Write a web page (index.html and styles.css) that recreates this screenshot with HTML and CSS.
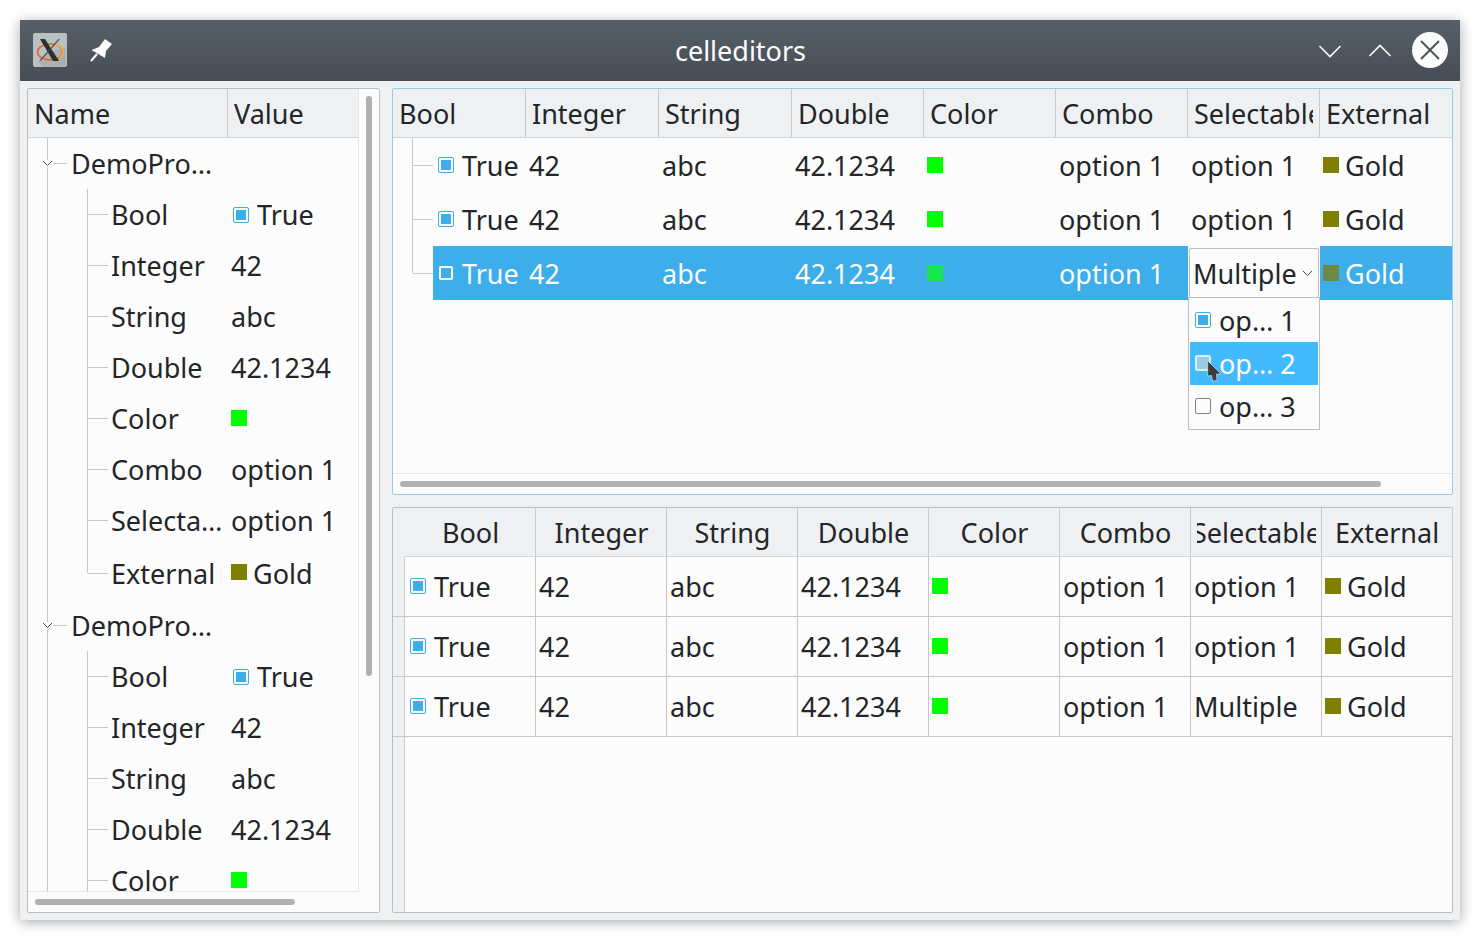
FILE: index.html
```html
<!DOCTYPE html>
<html lang="en">
<head>
  <meta charset="UTF-8" />
  <title>celleditors</title>
  <link rel="stylesheet" href="styles.css">
</head>
<body>
<div class="window">

  <div class="titlebar">
    <div class="title-left">
      <svg class="app-icon" width="34" height="34" viewBox="0 0 34 34">
        <rect width="34" height="34" rx="2" fill="#b9c1c3"/>
        <path d="M5 29 L14 20 L33 14 L33 32 Q33 34 31 34 L11 34 Z" fill="#a9b1b3"/>
        <ellipse cx="17" cy="19" rx="12.5" ry="8" fill="none" stroke="#e8641c" stroke-width="1.5"/>
        <path d="M21 11.5 A12.5 8 0 0 1 26 25" fill="none" stroke="#f2b233" stroke-width="1.5"/>
        <path d="M7 6 H12 L26 28 H20 Z" fill="#2e2e2e"/>
        <path d="M27 6 L8 27.5 H6.5 L25.5 6 Z" fill="#4a4a4a"/>
      </svg>
      <svg class="pin-icon" width="24" height="24" viewBox="0 0 24 24">
        <path d="M15 1 L22 6 L16 13 L15 20 L1.5 12 L9 9 Z" fill="#fcfcfc"/>
        <path d="M7 16 L1 23" stroke="#fcfcfc" stroke-width="2"/>
      </svg>
    </div>
    <div class="title-text">celleditors</div>
    <div class="title-right">
      <svg class="title-btn" width="24" height="14" viewBox="0 0 24 14"><path d="M1.5 2 L12 12.5 L22.5 2" fill="none" stroke="#fcfcfc" stroke-width="1.6"/></svg>
      <svg class="title-btn" width="24" height="14" viewBox="0 0 24 14"><path d="M1.5 12 L12 1.5 L22.5 12" fill="none" stroke="#fcfcfc" stroke-width="1.6"/></svg>
      <svg class="close-icon" width="36" height="36" viewBox="0 0 36 36">
        <circle cx="18" cy="18" r="18" fill="#fcfcfc"/>
        <path d="M9 9 L27 27 M27 9 L9 27" stroke="#4d545c" stroke-width="2"/>
      </svg>
    </div>
  </div>

  <div class="content">

    <div class="panel tree-panel">
      <div class="tree-view">
        <div class="tree-head">
          <div class="th th-name">Name</div>
          <div class="th th-value">Value</div>
        </div>
        <div class="tree-body">

          <div class="tree-row">
            <div class="guide g-root"><svg class="chevron" width="11" height="7" viewBox="0 0 11 7"><path d="M1 1 L5.5 5.5 L10 1" fill="none" stroke="#45494d" stroke-width="1"/></svg></div>
            <div class="tree-name">DemoPro…</div>
          </div>
          <div class="tree-row"><div class="guide g-v"></div><div class="guide g-t"></div><div class="tree-name sub">Bool</div><div class="tree-val"><span class="check on"></span><span class="val-gap">True</span></div></div>
          <div class="tree-row"><div class="guide g-v"></div><div class="guide g-t"></div><div class="tree-name sub">Integer</div><div class="tree-val">42</div></div>
          <div class="tree-row"><div class="guide g-v"></div><div class="guide g-t"></div><div class="tree-name sub">String</div><div class="tree-val">abc</div></div>
          <div class="tree-row"><div class="guide g-v"></div><div class="guide g-t"></div><div class="tree-name sub">Double</div><div class="tree-val">42.1234</div></div>
          <div class="tree-row"><div class="guide g-v"></div><div class="guide g-t"></div><div class="tree-name sub">Color</div><div class="tree-val"><span class="swatch green"></span></div></div>
          <div class="tree-row"><div class="guide g-v"></div><div class="guide g-t"></div><div class="tree-name sub">Combo</div><div class="tree-val">option 1</div></div>
          <div class="tree-row"><div class="guide g-v"></div><div class="guide g-t"></div><div class="tree-name sub">Selecta…</div><div class="tree-val">option 1</div></div>
          <div class="tree-row tall"><div class="guide g-v"></div><div class="guide g-l"></div><div class="tree-name sub">External</div><div class="tree-val"><span class="swatch gold"></span><span class="gold-gap">Gold</span></div></div>

          <div class="tree-row">
            <div class="guide g-root"><svg class="chevron" width="11" height="7" viewBox="0 0 11 7"><path d="M1 1 L5.5 5.5 L10 1" fill="none" stroke="#45494d" stroke-width="1"/></svg></div>
            <div class="tree-name">DemoPro…</div>
          </div>
          <div class="tree-row"><div class="guide g-v"></div><div class="guide g-t"></div><div class="tree-name sub">Bool</div><div class="tree-val"><span class="check on"></span><span class="val-gap">True</span></div></div>
          <div class="tree-row"><div class="guide g-v"></div><div class="guide g-t"></div><div class="tree-name sub">Integer</div><div class="tree-val">42</div></div>
          <div class="tree-row"><div class="guide g-v"></div><div class="guide g-t"></div><div class="tree-name sub">String</div><div class="tree-val">abc</div></div>
          <div class="tree-row"><div class="guide g-v"></div><div class="guide g-t"></div><div class="tree-name sub">Double</div><div class="tree-val">42.1234</div></div>
          <div class="tree-row"><div class="guide g-v"></div><div class="guide g-t"></div><div class="tree-name sub">Color</div><div class="tree-val"><span class="swatch green"></span></div></div>
        </div>
      </div>
      <div class="vscroll"><div class="thumb-v"></div></div>
      <div class="hscroll"><div class="thumb-h"></div></div>
    </div>

    <div class="right">

      <div class="panel top-panel">
        <div class="grid top-grid head-row">
          <div class="th">Bool</div>
          <div class="th">Integer</div>
          <div class="th">String</div>
          <div class="th">Double</div>
          <div class="th">Color</div>
          <div class="th">Combo</div>
          <div class="th"><span class="clip-top">Selectable</span></div>
          <div class="th th-last">External</div>
        </div>
        <div class="top-body">
          <div class="grid top-grid top-row">
            <div class="first-cell"><div class="guide g-t"></div><div class="td"><span class="check on"></span><span class="bool-gap">True</span></div></div>
            <div class="td">42</div>
            <div class="td">abc</div>
            <div class="td">42.1234</div>
            <div class="td"><span class="swatch green"></span></div>
            <div class="td">option 1</div>
            <div class="td">option 1</div>
            <div class="td"><span class="swatch gold"></span><span class="gold-gap">Gold</span></div>
          </div>
          <div class="grid top-grid top-row">
            <div class="first-cell"><div class="guide g-t"></div><div class="td"><span class="check on"></span><span class="bool-gap">True</span></div></div>
            <div class="td">42</div>
            <div class="td">abc</div>
            <div class="td">42.1234</div>
            <div class="td"><span class="swatch green"></span></div>
            <div class="td">option 1</div>
            <div class="td">option 1</div>
            <div class="td"><span class="swatch gold"></span><span class="gold-gap">Gold</span></div>
          </div>
          <div class="grid top-grid top-row selected">
            <div class="first-cell"><div class="guide g-l"></div><div class="td sel"><span class="check inv"></span><span class="bool-gap">True</span></div></div>
            <div class="td sel">42</div>
            <div class="td sel">abc</div>
            <div class="td sel">42.1234</div>
            <div class="td sel"><span class="swatch green-sel"></span></div>
            <div class="td sel">option 1</div>
            <div class="editor-cell">
              <div class="combo">
                <span class="combo-text">Multiple</span>
                <svg width="11" height="7" viewBox="0 0 11 7"><path d="M1 1 L5.5 5.5 L10 1" fill="none" stroke="#45494d" stroke-width="1"/></svg>
              </div>
              <div class="popup">
                <div class="popup-item"><span class="check on"></span><span class="item-gap">op… 1</span></div>
                <div class="popup-item hover"><span class="check hov"></span><span class="item-gap">op… 2</span></div>
                <div class="popup-item"><span class="check off"></span><span class="item-gap">op… 3</span></div>
                <svg class="cursor" width="15" height="22" viewBox="0 0 15 22"><path d="M0.7 0.7 L14 14 L9.5 14 L10 20.5 L5.5 21 L4.5 15.5 L0.7 16 Z" fill="#3b3b3b" stroke="#e8f4fb" stroke-width="0.6"/></svg>
              </div>
            </div>
            <div class="td sel"><span class="swatch gold-sel"></span><span class="gold-gap">Gold</span></div>
          </div>
        </div>
        <div class="top-scroll"><div class="thumb-top"></div></div>
      </div>

      <div class="panel bottom-panel">
        <div class="grid bottom-grid head-row">
          <div class="corner"></div>
          <div class="th center">Bool</div>
          <div class="th center">Integer</div>
          <div class="th center">String</div>
          <div class="th center">Double</div>
          <div class="th center">Color</div>
          <div class="th center">Combo</div>
          <div class="th center"><span class="clip-bottom"><span>Selectable</span></span></div>
          <div class="th center">External</div>
        </div>
        <div class="grid bottom-grid table-row">
          <div class="vhead"></div>
          <div class="cell"><span class="check on"></span><span class="bool-gap">True</span></div>
          <div class="cell">42</div>
          <div class="cell">abc</div>
          <div class="cell">42.1234</div>
          <div class="cell"><span class="swatch green"></span></div>
          <div class="cell">option 1</div>
          <div class="cell">option 1</div>
          <div class="cell"><span class="swatch gold"></span><span class="gold-gap">Gold</span></div>
        </div>
        <div class="grid bottom-grid table-row">
          <div class="vhead"></div>
          <div class="cell"><span class="check on"></span><span class="bool-gap">True</span></div>
          <div class="cell">42</div>
          <div class="cell">abc</div>
          <div class="cell">42.1234</div>
          <div class="cell"><span class="swatch green"></span></div>
          <div class="cell">option 1</div>
          <div class="cell">option 1</div>
          <div class="cell"><span class="swatch gold"></span><span class="gold-gap">Gold</span></div>
        </div>
        <div class="grid bottom-grid table-row">
          <div class="vhead"></div>
          <div class="cell"><span class="check on"></span><span class="bool-gap">True</span></div>
          <div class="cell">42</div>
          <div class="cell">abc</div>
          <div class="cell">42.1234</div>
          <div class="cell"><span class="swatch green"></span></div>
          <div class="cell">option 1</div>
          <div class="cell">Multiple</div>
          <div class="cell"><span class="swatch gold"></span><span class="gold-gap">Gold</span></div>
        </div>
        <div class="bottom-rest"><div class="vhead-rest"></div></div>
      </div>

    </div>
  </div>
</div>
</body>
</html>
```
FILE: styles.css
```css
* {
  box-sizing: border-box;
}
html, body {
  margin: 0;
  height: 100%;
  background: #fff;
  overflow: hidden;
}
body {
  padding: 20px;
  font-family: "Noto Sans", sans-serif;
  font-size: 27px;
  color: #232629;
}
.window {
  width: 1440px;
  height: 900px;
  background: #eff0f1;
  box-shadow: 0 2px 12px rgba(0,0,0,0.35);
  display: flex;
  flex-direction: column;
}

/* title bar */
.titlebar {
  height: 61px;
  flex: none;
  background: linear-gradient(#565f68, #474d55);
  display: grid;
  grid-template-columns: 1fr auto 1fr;
  align-items: center;
  padding: 0 12px 2px 13px;
}
.title-left {
  display: flex;
  align-items: center;
  gap: 23px;
}
.title-text {
  color: #fcfcfc;
  margin-top: 2px;
}
.title-right {
  display: flex;
  align-items: center;
  justify-content: flex-end;
  gap: 26px;
}
.title-btn {
  margin-top: 2px;
}
.close-icon {
  margin-left: -6px;
}

/* panels */
.content {
  flex: 1;
  display: flex;
  gap: 12px;
  padding: 7px;
  min-height: 0;
}
.panel {
  background: #fcfcfc;
  border: 1px solid #bcbebf;
  border-radius: 2px;
}
.tree-panel {
  width: 353px;
  display: grid;
  grid-template-columns: 331px 1fr;
  grid-template-rows: 803px 1fr;
}
.right {
  width: 1061px;
  display: flex;
  flex-direction: column;
  gap: 12px;
}
.top-panel {
  height: 407px;
  border-color: #93cee9;
  display: flex;
  flex-direction: column;
}
.bottom-panel {
  height: 406px;
  display: flex;
  flex-direction: column;
}

/* headers */
.th {
  height: 49px;
  background: #eff0f1;
  border-right: 1px solid #c9cacb;
  border-bottom: 1px solid #d3d4d5;
  padding: 3px 0 0 6px;
  line-height: 44px;
  overflow: hidden;
  white-space: nowrap;
}
.th-last {
  border-right: none;
}
.center {
  text-align: center;
  padding-left: 1px;
}
.center:last-child {
  padding-left: 0;
}
.clip-top {
  display: block;
  width: 119px;
  overflow: hidden;
}
.clip-bottom {
  display: flex;
  justify-content: center;
  width: 119px;
  margin-left: 5px;
  overflow: hidden;
}
.clip-bottom span {
  flex: none;
}

/* tree on the left */
.tree-view {
  grid-column: 1;
  grid-row: 1;
  border-right: 1px solid #e6e7e8;
  border-bottom: 1px solid #e6e7e8;
  display: flex;
  flex-direction: column;
  overflow: hidden;
}
.tree-head {
  display: flex;
  flex: none;
}
.th-name {
  width: 200px;
}
.th-value {
  flex: 1;
  border-right: none;
}
.tree-body {
  flex: 1;
  overflow: hidden;
}
.tree-row {
  display: flex;
  height: 51px;
  line-height: 51px;
  white-space: nowrap;
}
.tree-row.tall {
  height: 54px;
  line-height: 55px;
}
.tree-name {
  padding-left: 3px;
  width: 160px;
}
.tree-name.sub {
  width: 120px;
}
.tree-val {
  padding-left: 3px;
  display: flex;
  align-items: center;
}
.tree-val .check {
  margin-left: 2px;
}
.tree-val .swatch {
  margin-top: -2px;
}
.guide {
  width: 40px;
  flex: none;
  background-repeat: no-repeat;
}
.g-v {
  background-image: linear-gradient(#c6c7c8, #c6c7c8);
  background-position: 19px 0;
  background-size: 1px 100%;
}
.g-t {
  background-image: linear-gradient(#c6c7c8, #c6c7c8), linear-gradient(#c6c7c8, #c6c7c8);
  background-position: 19px 0, 20px 50%;
  background-size: 1px 100%, 20px 1px;
}
.g-l {
  background-image: linear-gradient(#c6c7c8, #c6c7c8), linear-gradient(#c6c7c8, #c6c7c8);
  background-position: 19px 0, 20px 50%;
  background-size: 1px 50%, 20px 1px;
}
.g-root {
  background-image: linear-gradient(#c6c7c8, #c6c7c8), linear-gradient(#c6c7c8, #c6c7c8);
  background-position: 19px 0, 24px 50%;
  background-size: 1px 100%, 15px 1px;
  display: flex;
  align-items: center;
}
.chevron {
  margin-left: 14px;
  background: #fcfcfc;
}

/* scroll bars */
.vscroll {
  grid-column: 2;
  grid-row: 1;
  padding: 7px 0 0 7px;
}
.thumb-v {
  width: 6px;
  height: 580px;
  background: #b0b1b2;
  border-radius: 3px;
}
.hscroll {
  grid-column: 1 / 3;
  grid-row: 2;
  padding: 7px 0 0 7px;
}
.thumb-h {
  width: 260px;
  height: 6px;
  background: #b0b1b2;
  border-radius: 3px;
}
.top-scroll {
  height: 21px;
  flex: none;
  border-top: 1px solid #e6e7e8;
  padding: 7px 0 0 7px;
}
.thumb-top {
  width: 981px;
  height: 6px;
  background: #b0b1b2;
  border-radius: 3px;
}

/* shared bits */
.grid {
  display: grid;
}
.check {
  width: 16px;
  height: 16px;
  flex: none;
  display: block;
  border-radius: 2px;
}
.check.on {
  border: 1px solid #3daee9;
  padding: 2px;
  background: #3daee9 content-box;
}
.check.off {
  border: 1px solid #7f8284;
  background: #fcfcfc;
}
.check.inv {
  width: 14px;
  height: 14px;
  margin: 0 1px;
  border: 2px solid #fcfcfc;
}
.check.hov {
  border: 2px solid #d9eef9;
  background: #97cde8;
}
.swatch {
  width: 16px;
  height: 16px;
  flex: none;
  display: block;
}
.green { background: #00ff00; }
.gold { background: #808000; }
.green-sel { background: #16e84b; }
.gold-sel { background: #6c8a45; }
.val-gap { margin-left: 8px; }
.gold-gap { margin-left: 6px; }
.bool-gap { margin-left: 8px; }
.item-gap { margin-left: 8px; }

/* top table */
.top-grid {
  grid-template-columns: 133px 133px 133px 132px 132px 132px 132px 132px;
}
.top-body {
  flex: 1;
}
.top-row {
  grid-auto-rows: 54px;
  line-height: 40px;
}
.first-cell {
  display: flex;
}
.td {
  flex: 1;
  padding: 2px 0 0 3px;
  display: flex;
  align-items: center;
  white-space: nowrap;
  min-width: 0;
}
.td .check, .td .swatch {
  margin-top: -2px;
}
.first-cell .td {
  padding-left: 5px;
}
.sel {
  background: #3daee9;
  color: #fcfcfc;
}
.editor-cell {
  position: relative;
  padding: 2px 0 0 1px;
}
.combo {
  width: 130px;
  height: 50px;
  background: #fcfcfc;
  border: 1px solid #bcbebf;
  border-radius: 2px;
  color: #232629;
  display: flex;
  align-items: center;
  justify-content: space-between;
  padding: 0 5px 0 3px;
}
.combo-text {
  margin-top: 2px;
}
.popup {
  position: absolute;
  left: 0;
  top: 51px;
  width: 132px;
  height: 133px;
  background: #fcfcfc;
  border: 1px solid #bcbebf;
  padding: 1px;
  z-index: 2;
}
.popup-item {
  height: 43px;
  display: flex;
  align-items: center;
  padding-left: 5px;
  line-height: 43px;
  color: #232629;
}
.popup-item .check {
  margin-top: -2px;
}
.popup-item.hover {
  background: #43baff;
  color: #fcfcfc;
}
.cursor {
  position: absolute;
  left: 18px;
  top: 62px;
}

/* bottom table */
.bottom-grid {
  grid-template-columns: 12px 131px 131px 131px 131px 131px 131px 131px 131px;
}
.corner {
  background: #eff0f1;
}
.table-row {
  height: 60px;
}
.vhead {
  background: #eff0f1;
  border-right: 1px solid #c9cacb;
  border-bottom: 1px solid #c9cacb;
}
.cell {
  border-right: 1px solid #c4c6ca;
  border-bottom: 1px solid #c4c6ca;
  padding-left: 3px;
  display: flex;
  align-items: center;
  white-space: nowrap;
}
.cell .check, .cell .swatch {
  margin-top: -2px;
}
.cell:nth-child(2) {
  padding-left: 5px;
}
.bottom-rest {
  flex: 1;
}
.vhead-rest {
  width: 12px;
  height: 100%;
  background: #eff0f1;
  border-right: 1px solid #c9cacb;
}
```
